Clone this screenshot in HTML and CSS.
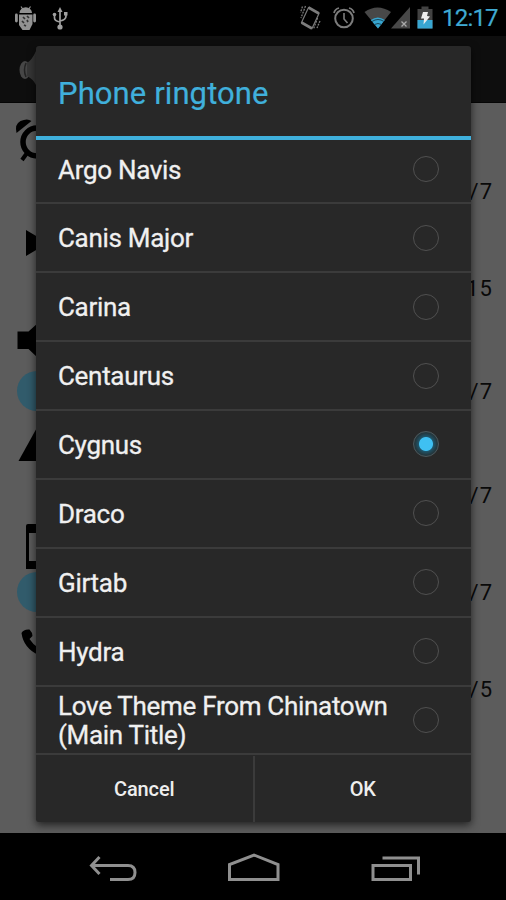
FILE: index.html
```html
<!DOCTYPE html>
<html lang="en">
<head>
<meta charset="utf-8">
<title>Phone ringtone</title>
<link rel="stylesheet" href="styles.css">
</head>
<body>
<div class="phone">
  <header class="status">
    <svg class="status-left" width="80" height="36" viewBox="0 0 80 36">
      <g fill="#929292"><path d="M19.500 13a6 5.500 0 0 1 12.500 0z"/><rect x="15" y="13.500" width="2.800" height="9" rx="1.400"/><rect x="33.200" y="13.500" width="2.800" height="9" rx="1.400"/><path d="M19 14.500h13.500v9.500l-3 6h-7l-3.500-5z"/></g>
      <path d="M21 6.500l2 3M30.500 6.500l-2 3" stroke="#929292" stroke-width="1.200"/>
      <path d="M23 17l2 2m2-3l2 2m-7 3l2 2m3-3l1 2m-4 3l2 1m-2-8l1 1" stroke="#333" stroke-width="1.700"/>
      <g fill="none" stroke="#a0a0a0" stroke-width="1.700"><path d="M60 10v17M54.500 15v3q0 3 5.500 4M66 14v2q0 4-6 5"/></g>
      <g fill="#a0a0a0"><path d="M57.500 12l2.500-5 2.500 5z"/><circle cx="60" cy="27" r="2.600"/><circle cx="54.500" cy="14.500" r="1.800"/><rect x="64" y="12" width="3.500" height="3.500"/></g>
    </svg>
    <svg class="status-right" width="136" height="36" viewBox="298 0 136 36">
      <g fill="none" stroke="#7c7c7c">
        <path d="M308.500 7.500l10.500 6-7 15-10.500-6z" stroke-width="1.200"/>
        <path d="M308.500 7.500l10.500 6M312 28.500l-10.500-6" stroke-width="2.600"/>
        <path d="M302.500 6.500l-2 6m5-6.500l-4.500 12m16.500 0l-4 11m6.500-8l-3 7" stroke-width="1.300" stroke-dasharray="2 1"/>
        <circle cx="344" cy="18.500" r="8.800" stroke-width="2"/><path d="M344 13v6l3.500 4" stroke-width="1.600"/><path d="M334 13q1-4 5-5M354 13q-1-4-5-5" stroke-width="1.800"/>
      </g>
      <path d="M364.500 12q13-9 26.500 0L378 28.500z" fill="#484848"/>
      <path d="M370.800 20q7-5 14 0L378 28.500z" fill="#36a5d0"/>
      <path d="M372 21.500q6-4 12 0M374.500 24.500q3.500-2 7 0" stroke="#17465a" fill="none"/>
      <path d="M391 28.500L410 7v21.500z" fill="#484848"/><path d="M401.500 21.500l5 5m0-5l-5 5" stroke="#aaa" stroke-width="1.300"/>
      <path d="M417.500 9h4V6.500h7V9h4v19.500h-15z" fill="#424242"/><path d="M417.500 20h15v8.500h-15z" fill="#38a6d2"/>
      <path d="M423 12h5l-1 4 3 .5-6.500 8 .5-6h-3z" fill="#eee"/>
    </svg>
    <span class="clock">12:17</span>
  </header>

  <div class="actionbar">
    <svg width="60" height="67" viewBox="0 36 60 67"><ellipse cx="25" cy="70" rx="5.500" ry="9" fill="#464646"/><path d="M26 63q-3 7 0 14" stroke="#222" stroke-width="1.500" fill="none"/><path d="M27 63q5-3 9-12v34q-3-6-9-9z" fill="#363636"/></svg>
  </div>

  <main class="volumes">
    <div class="volume r1"><svg width="60" height="104" viewBox="0 103 60 104"><path d="M16.500 133q-2-9 4-12 7-3 11 0z"/><circle cx="37" cy="142" r="14" fill="none" stroke="#000" stroke-width="5.500"/><path d="M27 153l-5 7" stroke="#000" stroke-width="4"/></svg><span>7/7</span></div>
    <div class="volume r2"><svg width="60" height="97" viewBox="0 207 60 97"><path d="M26 230l22 13-22 13z"/></svg><span>15/15</span></div>
    <div class="volume r3"><svg width="60" height="103" viewBox="0 304 60 103"><path d="M17.500 331.500h11L38 323v35l-9.500-9h-11z"/><circle class="knob" cx="37" cy="391" r="20"/></svg><span>7/7</span></div>
    <div class="volume r4"><svg width="60" height="104" viewBox="0 407 60 104"><path d="M18.500 461L39 424v37z"/></svg><span>7/7</span></div>
    <div class="volume r5"><svg width="60" height="97" viewBox="0 511 60 97"><path fill-rule="evenodd" d="M28 524h24v45H26v-43q0-2 2-2zM29 533v28h20v-28z"/><circle class="knob" cx="37" cy="592" r="20"/></svg><span>7/7</span></div>
    <div class="volume r6"><svg width="60" height="97" viewBox="0 608 60 97"><path d="M21.500 633q2-4 8-3.500 3 3 3 6.500l-3 3q3 5 9 9v7q-15-7-17-22z"/></svg><span>5/5</span></div>
  </main>

  <nav class="navbar">
    <svg width="506" height="67" viewBox="0 833 506 67" fill="none" stroke="#8f8f8f" stroke-width="3">
      <path d="M99.500 857l-8 8.500 8 8.500M92 865.500h36q7 0 7 7t-7 7h-18"/>
      <path d="M229.500 879.500V864.500l24.500-9.500 24 9.500v15z"/>
      <path d="M373 865.500h37.500v14H373zM382.500 858h36v16.500"/>
    </svg>
  </nav>

  <section class="dialog">
    <h1>Phone ringtone</h1>
    <ul class="tones">
      <li><span>Argo Navis</span><i class="radio"></i></li>
      <li><span>Canis Major</span><i class="radio"></i></li>
      <li><span>Carina</span><i class="radio"></i></li>
      <li><span>Centaurus</span><i class="radio"></i></li>
      <li><span>Cygnus</span><i class="radio checked"></i></li>
      <li><span>Draco</span><i class="radio"></i></li>
      <li><span>Girtab</span><i class="radio"></i></li>
      <li><span>Hydra</span><i class="radio"></i></li>
      <li><span>Love Theme From Chinatown<br>(Main Title)</span><i class="radio"></i></li>
    </ul>
    <div class="buttons"><button>Cancel</button><button>OK</button></div>
  </section>
</div>
</body>
</html>
```
FILE: styles.css
```css
* { box-sizing: border-box; }
body { margin: 0; background: #000; font-family: Roboto, sans-serif; }
.phone { position: relative; width: 506px; height: 900px; overflow: hidden; display: flex; flex-direction: column; }
svg { display: block; flex: none; overflow: visible; }

.status { height: 36px; background: #000; display: flex; align-items: center; }
.status-right { margin-left: auto; }
.clock { width: 72px; padding-left: 8px; font-size: 24px; line-height: 36px; letter-spacing: -.8px; color: #3fa9d2; white-space: nowrap; -webkit-text-stroke: .2px; }

.actionbar { height: 67px; background: #0e0e0e; border-bottom: 1px solid #050505; }

.volumes { height: 730px; background: #5c5c5c; }
.volume { display: flex; justify-content: space-between; align-items: flex-end; padding-right: 13px; font-size: 22px; line-height: 30px; letter-spacing: 1px; color: #090909; }
.r1, .r4 { height: 104px; }
.r2, .r5, .r6 { height: 97px; }
.r3 { height: 103px; }
.knob { fill: #315b6b; }

.navbar { height: 67px; background: #000; }

.dialog { position: absolute; left: 36px; top: 46px; width: 435px; height: 776px; display: flex; flex-direction: column; background: #282828; border-radius: 3px; box-shadow: 0 3px 9px rgba(0, 0, 0, .65); overflow: hidden; }
.dialog h1 { margin: 0; height: 94px; padding-left: 22px; border-bottom: 4px solid #3fb0dc; font-size: 31px; font-weight: 400; line-height: 95px; letter-spacing: .1px; color: #40b0dc; flex: none; -webkit-text-stroke: .2px; }
.tones { list-style: none; margin: 0; padding: 0; height: 616px; overflow: hidden; }
.tones li { display: flex; align-items: center; justify-content: space-between; height: 68.9px; padding: 0 32px 0 22px; border-bottom: 2px solid #3b3b3b; font-size: 26px; line-height: 29.5px; letter-spacing: -.3px; color: #f0f0f0; white-space: nowrap; -webkit-text-stroke: .3px; }
.tones span { padding-top: 3px; }
.tones li:first-child { margin-top: -4.6px; }
.radio { width: 26px; height: 26px; border: 1.5px solid #505050; border-radius: 50%; flex: none; }
.radio.checked { border-color: #4c585c; background: radial-gradient(circle, #3fc0f2 0 6.5px, #205468 7.5px, #24383f 11px); }
.buttons { display: flex; flex: 1; }
.buttons button { flex: 1; border: 0; padding: 0; background: none; font: 500 20px Roboto, sans-serif; letter-spacing: -.1px; color: #eee; }
.buttons button + button { border-left: 2px solid #3b3b3b; }
```
